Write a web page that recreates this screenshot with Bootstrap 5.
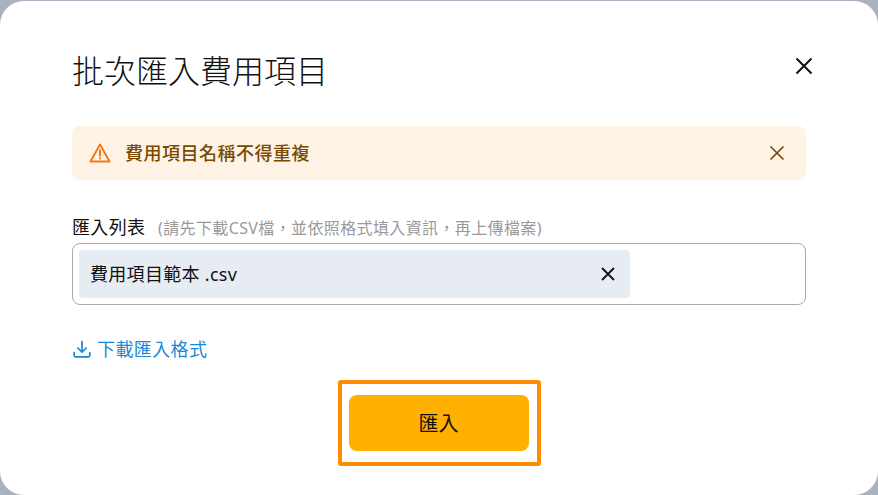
<!DOCTYPE html>
<html lang="zh-Hant">
<head>
<meta charset="utf-8">
<title>批次匯入費用項目</title>
<link href="https://cdn.jsdelivr.net/npm/bootstrap@5.3.0/dist/css/bootstrap.min.css" rel="stylesheet">
<style>
html,body{height:495px;overflow:hidden}
body{background:#aab1c1;font-family:"Noto Sans","Noto Sans CJK TC",sans-serif;padding-top:1px;color:#111}
.sheet{height:494px;background:#fff;border-radius:24px;padding:0 72px}
.sheet-head{height:125px;padding-top:46px}
.sheet-title{font-size:32px;line-height:48px;font-weight:300;margin:0;color:#111}
.x-btn{background:none;border:0;padding:0;display:flex;line-height:0}
.x-top{margin:10px -7px 0 0}
.warn{height:54px;background:#fff3e6;border-radius:8px;padding:0 21px 0 17px;color:#7a4a00;font-weight:500;font-size:18px;letter-spacing:.5px;margin-bottom:35px}
.warn-text{margin-left:14px}
.field-label{font-size:18px;letter-spacing:.35px;line-height:24px;margin:0 0 4px 0;height:24px;white-space:nowrap}
.hint{font-size:16px;color:#9a9a9a;margin-left:8px;letter-spacing:.38px}
.drop{height:62px;border:1px solid #aaa;border-radius:8px;padding:6px}
.chip{width:551px;height:48px;background:#e6ecf2;border-radius:4px;padding:0 15px 0 11px;font-size:18px;letter-spacing:.3px}
.dl-link{color:#1a88d8;text-decoration:none;font-size:18px;letter-spacing:.4px;line-height:24px;margin-top:32px;padding-left:1px;gap:6px}
.hl{width:203px;height:86px;border:4px solid #ff8c00;border-radius:3px;margin:19px auto 0;padding:11px 7px}
.go{width:180px;height:56px;background:#ffb000;border:0;border-radius:8px;color:#111;font-size:20px;padding-top:8px}
.go:hover{background:#ffb000;color:#111}
</style>
</head>
<body>
<div class="sheet d-flex flex-column">
  <div class="sheet-head d-flex justify-content-between align-items-start">
    <h1 class="sheet-title">批次匯入費用項目</h1>
    <button class="x-btn x-top" type="button" aria-label="關閉">
      <svg width="18" height="18" viewBox="0 0 18 18"><path d="M1.5 1.5l15 15M16.5 1.5l-15 15" stroke="#111" stroke-width="2" fill="none"/></svg>
    </button>
  </div>
  <div class="warn d-flex align-items-center justify-content-between">
    <div class="d-flex align-items-center">
      <svg width="22" height="20" viewBox="0 0 22 20"><path d="M11 1.6L1.4 18.4h19.2z" fill="none" stroke="#f07a1a" stroke-width="2" stroke-linejoin="round"/><path d="M11 7.2v5.6" stroke="#f07a1a" stroke-width="2" stroke-linecap="round"/><circle cx="11" cy="15.4" r="1.1" fill="#f07a1a"/></svg>
      <span class="warn-text">費用項目名稱不得重複</span>
    </div>
    <button class="x-btn" type="button" aria-label="關閉">
      <svg width="16" height="16" viewBox="0 0 16 16"><path d="M1.5 1.5l13 13M14.5 1.5l-13 13" stroke="#7a4a00" stroke-width="1.7" fill="none"/></svg>
    </button>
  </div>
  <div class="field-label">匯入列表<span class="hint"> (請先下載CSV檔，並依照格式填入資訊，再上傳檔案)</span></div>
  <div class="drop">
    <div class="chip d-flex align-items-center justify-content-between">
      <span>費用項目範本 .csv</span>
      <button class="x-btn" type="button" aria-label="移除">
        <svg width="14" height="14" viewBox="0 0 14 14"><path d="M1 1l12 12M13 1L1 13" stroke="#111" stroke-width="1.8" fill="none"/></svg>
      </button>
    </div>
  </div>
  <a class="dl-link d-flex align-items-center" href="#">
    <svg width="18" height="18" viewBox="0 0 18 18"><path d="M9 1.5v10.5M4.8 8L9 12.2 13.2 8M1.2 12.5v2.8a1.6 1.6 0 0 0 1.6 1.6h12.4a1.6 1.6 0 0 0 1.6-1.6v-2.8" fill="none" stroke="#1a88d8" stroke-width="1.7" stroke-linecap="round" stroke-linejoin="round"/></svg>
    <span>下載匯入格式</span>
  </a>
  <div class="hl"><button class="btn go d-block" type="button">匯入</button></div>
</div>
<script src="https://cdn.jsdelivr.net/npm/bootstrap@5.3.0/dist/js/bootstrap.bundle.min.js"></script>
</body>
</html>
